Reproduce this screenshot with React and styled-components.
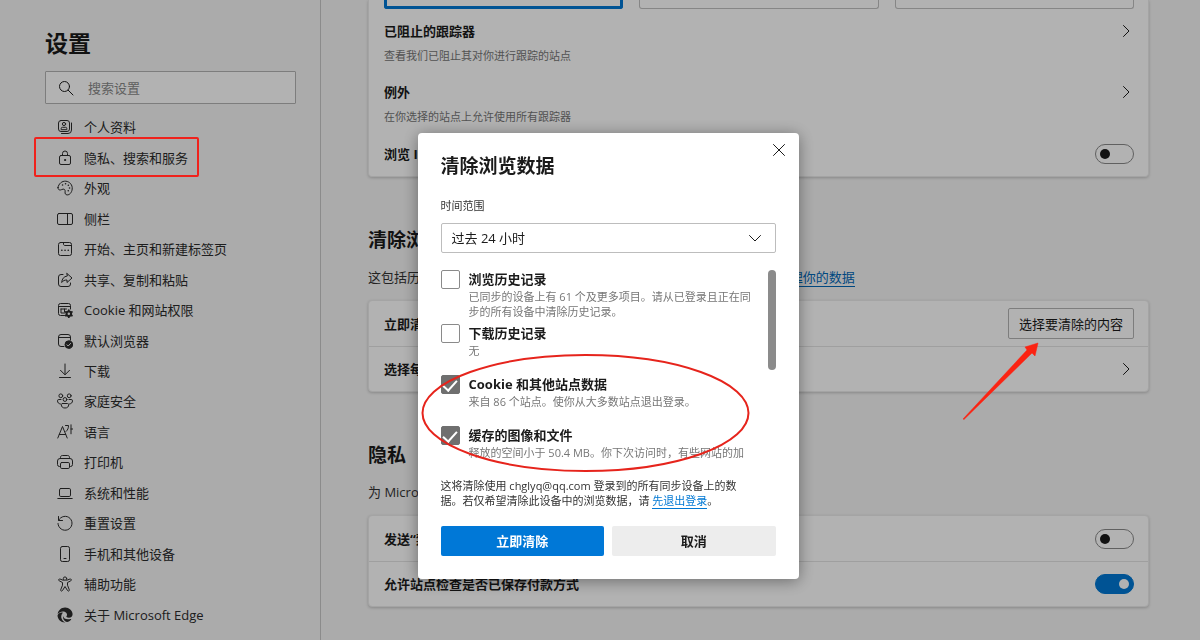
import React from 'react';
import styled, { createGlobalStyle } from 'styled-components';

const GlobalStyle = createGlobalStyle`
  * {
    box-sizing: border-box;
  }

  body {
    margin: 0;
    background: #f5f5f5;
    color: #1b1b1b;
    font-family: "Open Sans", "Noto Sans CJK SC", sans-serif;
    font-size: 13px;
    line-height: 20px;
    overflow: hidden;
  }

  button, input, select {
    font: inherit;
    color: inherit;
  }
`

const Page = styled.div`
  display: flex;
  height: 100vh;
  overflow: hidden;
`

const Sidebar = styled.aside`
  flex: 0 0 321px;
  display: flex;
  flex-direction: column;
  padding: 27px 24px 10px 45px;
  border-right: 1px solid #c8c8c8;
`

const SidebarTitle = styled.h1`
  margin: 0 0 12px;
  font-size: 23px;
  line-height: 32px;
`

const SearchBox = styled.label`
  display: flex;
  align-items: center;
  height: 33px;
  padding: 0 12px;
  gap: 14px;
  background: #fff;
  border: 1px solid #b4b4b4;
  border-radius: 1px;
`

const SearchInput = styled.input`
  flex: 1;
  min-width: 0;
  padding: 0;
  border: 0;
  outline: 0;
  background: none;

  &::placeholder {
    color: #8a8a8a;
    opacity: 1;
  }
`

const Nav = styled.nav`
  flex: 1;
  display: flex;
  flex-direction: column;
  margin-top: 8px;
`

const NavItem = styled.a`
  flex: 1;
  display: flex;
  align-items: center;
  gap: 11px;
  padding-left: 12px;
  color: #2b2b2b;
  text-decoration: none;
`

const Main = styled.main`
  flex: 1;
  min-width: 0;
  padding: 0 51px 0 47px;
`

const Section = styled.section`
  margin-top: 48px;
`

const SectionTitle = styled.h2`
  margin: 0;
  font-size: 19px;
  line-height: 30px;
`

const SectionText = styled.p`
  margin: 12px 0 13px;
  color: #333;
`

const Card = styled.div`
  background: #fff;
  border: 1px solid #ebebeb;
  border-top-width: ${props => props.$cut ? '0' : '1px'};
  border-radius: ${props => props.$cut ? '0 0 4px 4px' : '4px'};
  box-shadow: 0 1px 3px rgba(0, 0, 0, 0.2);
`

const Tiles = styled.div`
  display: grid;
  grid-template-columns: repeat(3, 1fr);
  gap: 16px;
  padding: 0 14px 0 15px;
`

const Tile = styled.div`
  height: 9px;
  border: ${props => props.$selected ? '3px solid #0078d4' : '1px solid #c0c0c0'};
  border-top: 0;
  border-radius: 0 0 3px 3px;
`

const Row = styled.div`
  display: flex;
  align-items: center;
  justify-content: space-between;
  min-height: 45px;
  padding: 0 14px 0 15px;

  & + & {
    border-top: 1px solid #e4e4e4;
  }
`

const PlainRow = styled(Row)`
  min-height: 45px;

  & + & {
    border-top: 0;
  }
`

const DetailRow = styled.div`
  display: flex;
  justify-content: space-between;
  padding: 12px 14px 6px 15px;
`

const RowTitle = styled.div`
  font-weight: bold;
`

const RowText = styled.div`
  margin-top: 7px;
  font-size: 11px;
  line-height: 16px;
  color: #767676;
`

const ArrowButton = styled.button`
  display: flex;
  align-items: center;
  justify-content: center;
  width: 16px;
  height: 20px;
  padding: 0;
  border: 0;
  background: none;
`

const OutlineButton = styled.button`
  height: 31px;
  padding: 0 10px;
  background: #fff;
  border: 1px solid #b4b4b4;
  border-radius: 2px;
`

const Toggle = styled.input`
  appearance: none;
  display: flex;
  align-items: center;
  justify-content: flex-start;
  width: 39px;
  height: 20px;
  margin: 0;
  padding: 0 4px;
  background: #fff;
  border: 1px solid #8a8a8a;
  border-radius: 10px;

  &::before {
    content: '';
    width: 10px;
    height: 10px;
    border-radius: 50%;
    background: #1b1b1b;
  }

  &:checked {
    justify-content: flex-end;
    background: #0078d4;
    border-color: #0078d4;
  }

  &:checked::before {
    background: #fff;
  }
`

const Link = styled.a`
  color: ${props => props.$bright ? '#0078d4' : '#0067b8'};
  text-decoration: none;
  border-bottom: 1px solid currentColor;
`

const Overlay = styled.div`
  position: fixed;
  inset: 0;
  display: flex;
  align-items: flex-start;
  justify-content: center;
  padding: 133px 0 0 16px;
  background: rgba(0, 0, 0, 0.3);
`

const Dialog = styled.div`
  width: 381px;
  padding: 17px 23px 23px;
  background: #fff;
  border-radius: 4px;
  box-shadow: 0 2px 16px rgba(0, 0, 0, 0.4);
`

const DialogHeader = styled.div`
  display: flex;
  align-items: flex-start;
  justify-content: space-between;
`

const DialogTitle = styled.h2`
  margin: 0;
  font-size: 19px;
  line-height: 32px;
`

const CloseButton = styled.button`
  display: flex;
  align-items: center;
  justify-content: center;
  width: 14px;
  height: 14px;
  padding: 0;
  margin: -7px -10px 0 0;
  border: 0;
  background: none;
`

const FieldLabel = styled.label`
  display: block;
  margin: 16px 0 9px;
  font-size: 11px;
  line-height: 16px;
  color: #333;
`

const SelectWrap = styled.div`
  display: grid;
  align-items: center;
  justify-items: end;

  & > * {
    grid-area: 1 / 1;
  }

  svg {
    margin-right: 14px;
    pointer-events: none;
  }
`

const Select = styled.select`
  appearance: none;
  width: 100%;
  height: 30px;
  padding: 0 10px;
  background: #fff;
  border: 1px solid #bdbdbd;
  border-radius: 2px;
`

const ListArea = styled.div`
  display: flex;
  justify-content: space-between;
  height: 191px;
  margin-top: 17px;
  overflow: hidden;
`

const ScrollThumb = styled.div`
  flex: 0 0 8px;
  height: 100px;
  border-radius: 4px;
  background: #8b8b8b;
`

const Option = styled.div`
  display: flex;
  align-items: flex-start;
  gap: 9px;
  min-height: 51px;
  padding-bottom: 5px;
`

const Checkbox = styled.input`
  appearance: none;
  flex: 0 0 19px;
  display: flex;
  justify-content: center;
  height: 19px;
  margin: 0;
  background: #fff;
  border: 1px solid #8a8a8a;
  border-radius: 2px;

  &:checked {
    background: #6f6f6f;
    border-color: #6f6f6f;
  }

  &:checked::before {
    content: '';
    width: 6px;
    height: 12px;
    margin-top: 1px;
    border: solid #fff;
    border-width: 0 2px 2px 0;
    transform: rotate(42deg);
  }
`

const OptionTitle = styled.label`
  display: block;
  line-height: 19px;
  font-weight: bold;
`

const OptionText = styled.div`
  font-size: 11px;
  line-height: 15px;
  color: #767676;
  white-space: nowrap;
`

const Note = styled.p`
  margin: 17px 0 18px;
  font-size: 11px;
  line-height: 15px;
  color: #333;
  white-space: nowrap;
`

const Actions = styled.div`
  display: grid;
  grid-template-columns: 1fr 1fr;
  gap: 8px;
`

const ActionButton = styled.button`
  height: 30px;
  padding: 0;
  border: 0;
  border-radius: 2px;
  font-weight: bold;
  color: ${props => props.$primary ? '#fff' : '#1b1b1b'};
  background: ${props => props.$primary ? '#0078d7' : '#ededed'};
`

const Marks = styled.svg`
  position: fixed;
  top: 0;
  left: 0;
  pointer-events: none;
`

function Icon({ size = 16, box = 16, children }) {
  return (
    <svg
      width={size}
      height={size}
      viewBox={`0 0 ${box} ${box}`}
      fill="none"
      stroke="currentColor"
      strokeLinecap="round"
      strokeLinejoin="round"
      aria-hidden="true"
    >
      {children}
    </svg>
  );
}

function ChevronRight() {
  return (
    <Icon>
      <path d="M5.500 2.500 11 8l-5.500 5.500" />
    </Icon>
  );
}

const icons = {
  profile: (
    <>
      <rect x="1.500" y="1.500" width="11" height="11" rx="2.500" />
      <circle cx="7" cy="5" r="1.600" />
      <path d="M4.200 10.300V9.500c0-.8.500-1.200 1.200-1.200h3.200c.7 0 1.200.4 1.200 1.200v.8zM14.500 4v7a3.500 3.500 0 0 1-3.500 3.500H4.500" />
    </>
  ),
  lock: (
    <>
      <rect x="2.500" y="5.500" width="11" height="9" rx="1.500" />
      <path d="M5.500 5.500V3.500a2.500 2.500 0 0 1 5 0v2" />
      <circle cx="8" cy="10" r=".6" fill="currentColor" />
    </>
  ),
  palette: (
    <>
      <path d="M1 7.500C1.600 3.600 5 .9 8.800 1.200c4 .4 6.800 3.800 6.400 7.800-.4 3.600-2.600 6-5 5.900-1.800-.1-2.400-1.500-2.100-3 .3-1.700-.5-3-2-2.800-1 .1-1.700.9-2.800.9C1.600 10 .8 9 1 7.500z" />
      <path d="M5.500 5h.1M8.500 3.800h.1M11.300 5.200h.1M12.500 8h.1M11.200 10.800h.1" strokeWidth="1.500" />
    </>
  ),
  sidebar: (
    <>
      <rect x=".5" y="2.500" width="15" height="11" rx="1.500" />
      <path d="M10.500 2.500v11" />
    </>
  ),
  start: (
    <>
      <rect x="1.500" y="1.500" width="13" height="13" rx="2" />
      <path d="M6.500 1.500v1.500c0 1 .5 1.500 1.500 1.500h6.500" />
      <path d="M4.800 9.300h.1M8 9.300h.1M11.200 9.300h.1" strokeWidth="1.600" />
    </>
  ),
  share: (
    <>
      <path d="M6 2.500H4A2.500 2.500 0 0 0 1.500 5v7A2.500 2.500 0 0 0 4 14.500h7a2.500 2.500 0 0 0 2.500-2.500v-1" />
      <path d="M10 1.500 15 6l-5 4.500V8C7.500 8 6 8.700 4.700 10.500 5 7 6.600 4.500 10 4z" />
    </>
  ),
  cookie: (
    <>
      <path d="M7.500 13.500h-4a2 2 0 0 1-2-2v-8a2 2 0 0 1 2-2h8a2 2 0 0 1 2 2V7M1.500 4.500h12M4 7v4h3.500M4 7h5.500M7.500 7v3" />
      <circle cx="11.800" cy="11.800" r="2.300" strokeWidth="2" />
      <path d="M11.800 8.200v1M11.800 14.400v1M8.700 10l.9.500M14 13.100l.9.500M14.900 10l-.9.500M9.600 13.100l-.9.500" strokeWidth="1.800" />
    </>
  ),
  browser: (
    <>
      <path d="M7 13.500H4A2.500 2.500 0 0 1 1.500 11V4A2.500 2.500 0 0 1 4 1.500h7A2.500 2.500 0 0 1 13.500 4v3M1.500 4.500h12" />
      <circle cx="11.800" cy="11.600" r="3.800" fill="currentColor" />
      <path d="m10 11.800 1.200 1.200 2.400-2.600" stroke="#f5f5f5" />
    </>
  ),
  download: (
    <path d="M8 1v10.500M3.500 7.300 8 11.800l4.500-4.500M2.500 14.500h11" />
  ),
  family: (
    <>
      <circle cx="3.800" cy="2.800" r="1.900" />
      <circle cx="12.200" cy="2.800" r="1.900" />
      <circle cx="8" cy="6.500" r="1.900" />
      <path d="M4 6.500H1.800C.9 6.500.5 7 .5 7.800c0 1.700 1 2.900 2.900 3.200M12 6.500h2.200c.9 0 1.300.5 1.300 1.300 0 1.700-1 2.900-2.900 3.200M5.500 10.500h5c.8 0 1.200.5 1.200 1.200 0 2-1.300 3.300-3.700 3.300s-3.700-1.300-3.700-3.300c0-.7.400-1.200 1.200-1.200z" />
    </>
  ),
  language: (
    <path d="m.8 14 4.700-11.500L10.200 14M2.300 10.500h6.400M8.500 1.500h3c0 2.500-.6 4.300-2.500 6M14 .8v9M14 5h1.800" />
  ),
  printer: (
    <>
      <path d="M3.500 12.500h-1a2 2 0 0 1-2-2V7A2.500 2.500 0 0 1 3 4.500h10A2.500 2.500 0 0 1 15.500 7v3.500a2 2 0 0 1-2 2h-1M3.500 4.500V3.300c0-1 .7-1.800 1.800-1.800h5.400c1.100 0 1.800.8 1.800 1.800v1.200" />
      <rect x="3.500" y="8.500" width="9" height="6" rx="1.300" />
    </>
  ),
  system: (
    <>
      <rect x="2.500" y="3.500" width="11" height="8" rx="1.300" />
      <path d="M.8 13.500h14.400" />
    </>
  ),
  reset: (
    <path d="M1.500 1.500v4h4M1.700 5.200A7 7 0 1 1 1 8.500" />
  ),
  phone: (
    <>
      <rect x="3.500" y=".5" width="9" height="15" rx="1.800" />
      <path d="M7 12.500h2" />
    </>
  ),
  accessibility: (
    <>
      <circle cx="8" cy="2.600" r="1.700" />
      <path d="M6.300 4.300 3 3c-1.200-.4-1.900 1.200-.8 1.800l3.300 1.700v2.700l-1.800 4.600c-.4 1.200 1.200 1.800 1.800.7L8 10.500l2.500 4c.6 1.100 2.200.5 1.800-.7l-1.800-4.600V6.500l3.300-1.700C14.900 4.200 14.200 2.600 13 3L9.700 4.300" />
    </>
  ),
  edge: (
    <g stroke="none" fill="currentColor">
      <path d="M.7 7.200C1.100 3.300 4.300.4 8.200.5c3.900.1 7.200 3 7.400 6.500.1 2.200-1.500 3.700-3.700 3.700-1.600 0-2.700-.6-2.500-1.200.9-1 .9-2.600-.2-3.700C7.200 3.800 2.700 4.300.7 7.200z" />
      <path d="M.5 8.500c1-2.400 3.300-3.300 5.400-2.700C4 7.500 3.700 10.300 5 12.500c.8 1.400 1.900 2.300 3.300 2.900C4.200 15.700.8 12.700.5 8.500z" />
      <path d="M6 9c.5 2.500 3.500 4.200 7.700 2.900.5-.1.800.2.500.6-1.200 1.700-2.800 2.600-4.300 2.500C7.200 14.300 5.600 11.700 6 9z" />
    </g>
  ),
};

const navItems = [
  ['profile', '个人资料'],
  ['lock', '隐私、搜索和服务'],
  ['palette', '外观'],
  ['sidebar', '侧栏'],
  ['start', '开始、主页和新建标签页'],
  ['share', '共享、复制和粘贴'],
  ['cookie', 'Cookie 和网站权限'],
  ['browser', '默认浏览器'],
  ['download', '下载'],
  ['family', '家庭安全'],
  ['language', '语言'],
  ['printer', '打印机'],
  ['system', '系统和性能'],
  ['reset', '重置设置'],
  ['phone', '手机和其他设备'],
  ['accessibility', '辅助功能'],
  ['edge', '关于 Microsoft Edge'],
];

const options = [
  {
    id: 'history',
    title: '浏览历史记录',
    text: <>已同步的设备上有 61 个及更多项目。请从已登录且正在同<br />步的所有设备中清除历史记录。</>,
  },
  { id: 'downloads', title: '下载历史记录', text: '无' },
  {
    id: 'cookies',
    title: 'Cookie 和其他站点数据',
    text: '来自 86 个站点。使你从大多数站点退出登录。',
    checked: true,
  },
  {
    id: 'cache',
    title: '缓存的图像和文件',
    text: '释放的空间小于 50.4 MB。你下次访问时，有些网站的加',
    checked: true,
  },
];

function SettingsNav() {
  return (
    <Sidebar>
      <SidebarTitle>设置</SidebarTitle>
      <SearchBox>
        <Icon>
          <circle cx="6.500" cy="6.500" r="5" />
          <path d="m10.200 10.200 4.800 4.800" />
        </Icon>
        <SearchInput type="text" placeholder="搜索设置" aria-label="搜索设置" />
      </SearchBox>
      <Nav>
        {navItems.map(([icon, label]) => (
          <NavItem href="#" key={icon}>
            <Icon>{icons[icon]}</Icon>
            {label}
          </NavItem>
        ))}
      </Nav>
    </Sidebar>
  );
}

function LinkRow({ title, text }) {
  return (
    <DetailRow>
      <div>
        <RowTitle>{title}</RowTitle>
        <RowText>{text}</RowText>
      </div>
      <ArrowButton aria-label={title}><ChevronRight /></ArrowButton>
    </DetailRow>
  );
}

function ToggleRow({ id, title, checked, as: RowType = Row }) {
  return (
    <RowType>
      <RowTitle as="label" htmlFor={id}>{title}</RowTitle>
      <Toggle type="checkbox" role="switch" id={id} defaultChecked={checked} />
    </RowType>
  );
}

function ClearDataDialog() {
  return (
    <Overlay>
      <Dialog role="dialog" aria-labelledby="dialog-title">
        <DialogHeader>
          <DialogTitle id="dialog-title">清除浏览数据</DialogTitle>
          <CloseButton aria-label="关闭">
            <Icon size={14} box={14}>
              <path d="m1.500 1.500 11 11M12.500 1.500l-11 11" />
            </Icon>
          </CloseButton>
        </DialogHeader>
        <FieldLabel htmlFor="range">时间范围</FieldLabel>
        <SelectWrap>
          <Select id="range">
            <option>过去 24 小时</option>
          </Select>
          <Icon size={14} box={14}>
            <path d="m1.500 4.500 5.500 5.500 5.500-5.500" />
          </Icon>
        </SelectWrap>
        <ListArea>
          <div>
            {options.map(option => (
              <Option key={option.id}>
                <Checkbox type="checkbox" id={option.id} defaultChecked={option.checked} />
                <div>
                  <OptionTitle htmlFor={option.id}>{option.title}</OptionTitle>
                  <OptionText>{option.text}</OptionText>
                </div>
              </Option>
            ))}
          </div>
          <ScrollThumb />
        </ListArea>
        <Note>
          这将清除使用 chglyq@qq.com 登录到的所有同步设备上的数<br />
          据。若仅希望清除此设备中的浏览数据，请 <Link $bright href="#">先退出登录</Link>。
        </Note>
        <Actions>
          <ActionButton $primary>立即清除</ActionButton>
          <ActionButton>取消</ActionButton>
        </Actions>
      </Dialog>
    </Overlay>
  );
}

export default function App() {
  return (
    <>
      <GlobalStyle />
      <Page>
        <SettingsNav />
        <Main>
          <Card $cut>
            <Tiles>
              <Tile $selected />
              <Tile />
              <Tile />
            </Tiles>
            <LinkRow title="已阻止的跟踪器" text="查看我们已阻止其对你进行跟踪的站点" />
            <LinkRow title="例外" text="在你选择的站点上允许使用所有跟踪器" />
            <ToggleRow as={PlainRow} id="inprivate" title="浏览 InPrivate 时始终使用“严格”跟踪防护" />
          </Card>
          <Section>
            <SectionTitle>清除浏览数据</SectionTitle>
            <SectionText>
              这包括历史记录、密码、Cookie 等。将删除此用户配置文件中的数据。<Link href="#">管理你的数据</Link>
            </SectionText>
            <Card>
              <Row>
                <RowTitle>立即清除浏览数据</RowTitle>
                <OutlineButton>选择要清除的内容</OutlineButton>
              </Row>
              <Row>
                <RowTitle>选择每次关闭浏览器时要清除的内容</RowTitle>
                <ArrowButton aria-label="选择每次关闭浏览器时要清除的内容"><ChevronRight /></ArrowButton>
              </Row>
            </Card>
          </Section>
          <Section>
            <SectionTitle>隐私</SectionTitle>
            <SectionText>为 Microsoft Edge 选择隐私设置</SectionText>
            <Card>
              <ToggleRow id="dnt" title="发送“禁止跟踪”请求" />
              <ToggleRow id="payment" title="允许站点检查是否已保存付款方式" checked />
            </Card>
          </Section>
        </Main>
      </Page>
      <ClearDataDialog />
      <Marks width="1200" height="640" aria-hidden="true">
        <rect x="35" y="138" width="163" height="38" rx="1" fill="none" stroke="#f0221c" strokeWidth="2" />
        <ellipse cx="585.500" cy="413" rx="163" ry="58" fill="none" stroke="#e6241c" strokeWidth="2" />
        <path d="m963 419 64-69-2-3 13-4-3 13-3-3-68 66.500z" fill="#fb2312" stroke="#fb2312" strokeWidth=".5" />
      </Marks>
    </>
  );
}
